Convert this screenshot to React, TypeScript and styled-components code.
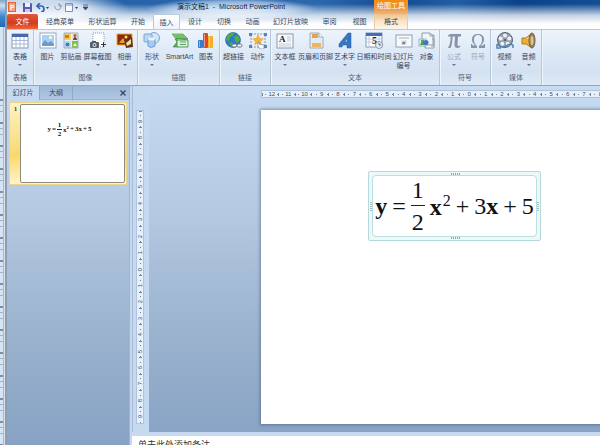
import React from 'react';
import styled, { createGlobalStyle, css } from 'styled-components';

const GlobalStyle = createGlobalStyle`
  * { box-sizing: border-box; }
  html, body, #root { height: 100%; }
  body {
    margin: 0;
    overflow: hidden;
    font-family: "Liberation Sans", "Noto Sans CJK SC", sans-serif;
    font-size: 7px;
    color: #3a4658;
  }
  button, textarea { font: inherit; color: inherit; border: 0; padding: 0; margin: 0; background: none; }
`;

const Screen = styled.div`
  display: flex;
  height: 100vh;
  overflow: hidden;
`;

const BackWindow = styled.aside`
  flex: 0 0 7px;
  display: flex;
  flex-direction: column;
  border-right: 2px solid #8f9dac;
  background: linear-gradient(90deg, #d6e5f6 0 3px, #a9b9ca 3px 4px, #d9e2ec 4px);
`;

const BackTitle = styled.div`
  height: 27px;
  background: linear-gradient(#7fa3c8, #cfdeed 20%, #3f87cf 60%, #2468b4);
`;

const BackRuler = styled.div`
  flex: 1;
  margin-top: 72px;
  width: 3px;
  background: repeating-linear-gradient(#7d8fa6 0 2px, transparent 2px 6px, #a3b3c7 6px 7px, transparent 7px 12px, #a3b3c7 12px 13px, transparent 13px 23px);
`;

const Window = styled.main`
  flex: 1;
  min-width: 0;
  display: flex;
  flex-direction: column;
`;

const Header = styled.header`
  height: 29px;
  display: flex;
  flex-direction: column;
  position: relative;
  background:
    radial-gradient(ellipse 85px 11px at 225px 9px, rgba(190, 213, 238, .95) 30%, rgba(160, 192, 227, .8) 70%, transparent),
    radial-gradient(ellipse 95px 18px at 28px 9px, rgba(214, 227, 241, .95) 50%, transparent),
    linear-gradient(105deg, #2360a7, #2c68ae 52%, #134a91 65%, #235fa5 75%, #0b4388 85%, #174f96);
  &::after {
    content: "";
    position: absolute;
    inset: 4px 0 0;
    background: linear-gradient(transparent, rgba(255, 255, 255, .75) 45%, #fff 80%);
  }
`;

const TitleBar = styled.div`
  height: 14px;
  display: flex;
  align-items: center;
  position: relative;
  z-index: 1;
`;

const QuickAccess = styled.div`
  display: flex;
  align-items: center;
  flex: 0 0 170px;
  height: 14px;
`;

const QuickButton = styled.button<{ $width: number }>`
  width: ${p => p.$width}px;
  height: 12px;
  display: flex;
  align-items: center;
  svg { display: block; }
`;

const WindowTitle = styled.h1`
  margin: 0;
  flex: 0 0 197px;
  font-size: 7px;
  font-weight: 400;
  line-height: 12px;
  white-space: pre;
  color: #14243a;
`;

const TabRow = styled.nav`
  height: 15px;
  display: flex;
  position: relative;
  z-index: 1;
`;

const Tab = styled.button<{ $width: number; $kind?: 'file' | 'active' | 'tool' }>`
  flex: 0 0 ${p => p.$width}px;
  height: 15px;
  line-height: 15px;
  text-align: center;
  white-space: nowrap;
  ${p => p.$kind === 'file' && css`
    color: #fff;
    background: linear-gradient(#e0583a, #d13c1c 60%, #ee6536);
    border-radius: 2px 2px 0 0;
  `}
  ${p => p.$kind === 'active' && css`
    background: linear-gradient(#fff, #eef4fb);
    border: 1px solid #b9cade;
    border-bottom: 0;
    border-radius: 2px 2px 0 0;
    line-height: 13px;
  `}
  ${p => p.$kind === 'tool' && css`
    background: linear-gradient(#f2c08c, #fae5c9 50%, #fdf6e9);
    border: solid #eccb9f;
    border-width: 0 1px;
  `}
`;

const ToolHeading = styled.div`
  flex: 0 0 34px;
  height: 14px;
  line-height: 12px;
  text-align: center;
  color: #fff;
  white-space: nowrap;
  background: linear-gradient(#f28c0e, #e99a48 60%, #efb47a);
`;

const Ribbon = styled.section`
  height: 57px;
  display: flex;
  border-top: 1px solid #b9c9dc;
  border-bottom: 1px solid #91a6c0;
  background: linear-gradient(#edf4fc, #dce8f6 45%, #d3e1f1 75%, #dfeaf6);
`;

const Group = styled.section`
  display: flex;
  flex-direction: column;
  flex: none;
  border-right: 1px solid #b6c7dc;
  box-shadow: 1px 0 #eef5fc;
`;

const GroupButtons = styled.div`
  flex: 1;
  display: flex;
  padding: 2px 1px 0;
`;

const GroupLabel = styled.h2`
  margin: 0;
  height: 13px;
  font-size: 7px;
  font-weight: 400;
  line-height: 12px;
  text-align: center;
  color: #4e6079;
`;

const Command = styled.button<{ $width: number }>`
  width: ${p => p.$width}px;
  height: 38px;
  display: flex;
  flex-direction: column;
  align-items: center;
  line-height: 9px;
  white-space: nowrap;
  &:disabled { color: #9aa6b5; }
  svg { display: block; flex: none; margin-bottom: 3px; }
`;

const Arrow = styled.span`
  margin-top: 3px;
  border: solid transparent;
  border-width: 2px 2px 0;
  border-top-color: #65758a;
`;

const Body = styled.div`
  flex: 1;
  min-height: 0;
  display: flex;
  background: linear-gradient(#c7dbf3, #b2c7e0 38%, #9ab2cd 70%, #87a2c4);
`;

const Outline = styled.aside`
  flex: 0 0 123px;
  border-right: 1px solid #a0b6d0;
`;

const OutlineTabs = styled.div`
  display: flex;
  height: 14px;
  border-bottom: 1px solid #9fb6d1;
  background: linear-gradient(#9fb9d8, #aec6e1);
`;

const OutlineTab = styled.button<{ $width: number; $active?: boolean }>`
  width: ${p => p.$width}px;
  height: 14px;
  line-height: 14px;
  color: #33485f;
  border-right: 1px solid #8fa9c7;
  background: ${p => (p.$active ? '#c6d9ef' : 'transparent')};
`;

const ClosePane = styled.button`
  margin-left: auto;
  width: 13px;
  height: 14px;
  display: grid;
  place-items: center;
`;

const ThumbItem = styled.button`
  display: flex;
  width: 118px;
  height: 83px;
  margin: 2px 0 0 2px;
  padding: 1px;
  border: 1px solid #ead58b;
  border-radius: 1px;
  background: linear-gradient(#fdf2c3, #f8df87 50%, #fad96b 65%, #fff4cb);
`;

const ThumbNumber = styled.span`
  width: 9px;
  padding-top: 1px;
  line-height: 8px;
  text-align: center;
  font-weight: 700;
  font-family: "Liberation Serif", serif;
`;

const ThumbSlide = styled.span`
  flex: 1;
  height: 79px;
  display: flex;
  justify-content: center;
  padding: 14px 6px 0 0;
  border: 1px solid #8e8b78;
  border-radius: 2px;
  background: #fff;
`;

const Editor = styled.section`
  flex: 1;
  min-width: 0;
  display: flex;
  flex-direction: column;
  border-left: 2px solid #c6d8ee;
`;

const Stage = styled.div`
  flex: 1;
  min-height: 0;
  display: flex;
`;

const RulerGutter = styled.div`
  flex: 0 0 16px;
  display: flex;
  padding: 24px 5px 8px 3px;
  border-left: 1px solid #a6bcd6;
  background: #c5d9f1;
`;

const VerticalRuler = styled.div`
  flex: 1;
  display: flex;
  flex-direction: column;
  border: 1px solid #afc3da;
  background: #e7f0fa;
`;

const Canvas = styled.div`
  flex: 1;
  min-width: 0;
  display: flex;
  flex-direction: column;
  overflow: hidden;
  padding: 4px 0 8px 112px;
`;

const HorizontalRuler = styled.div`
  flex: none;
  display: grid;
  grid-template-columns: repeat(25, 1fr);
  width: 412px;
  height: 8px;
  margin-bottom: 12px;
  border: 1px solid #afc3da;
  background: #e7f0fa;
`;

const RulerCell = styled.span<{ $vertical?: boolean }>`
  display: flex;
  flex: 1;
  min-width: 0;
  min-height: 0;
  align-items: center;
  justify-content: space-between;
  font-size: 6px;
  line-height: 6px;
  color: #3f536b;
  flex-direction: ${p => (p.$vertical ? 'column' : 'row')};
`;

const RulerNumber = styled.span<{ $vertical?: boolean }>`
  ${p => p.$vertical && css`
    writing-mode: vertical-rl;
    rotate: 180deg;
  `}
`;

const Tick = styled.i<{ $vertical?: boolean; $long?: boolean }>`
  flex: none;
  background: #7487a0;
  width: ${p => (p.$vertical && p.$long ? 3 : 1)}px;
  height: ${p => (!p.$vertical && p.$long ? 3 : 1)}px;
`;

const Slide = styled.article`
  flex: 1;
  min-height: 0;
  align-self: flex-start;
  aspect-ratio: 4 / 3;
  position: relative;
  background: #fff;
  box-shadow: 0 0 3px 1px rgba(66, 84, 108, .55);
`;

const EquationFrame = styled.div`
  position: absolute;
  left: 107px;
  top: 61px;
  width: 173px;
  height: 70px;
  padding: 3px;
  border: 1px solid #b4d9dc;
  border-radius: 2px;
  background: #edf8f8;
`;

const EquationBox = styled.div`
  height: 62px;
  display: flex;
  align-items: center;
  justify-content: center;
  border: 1px solid #b9dfe0;
  border-radius: 4px;
  background: #fff;
`;

const Grip = styled.i<{ $side: 'top' | 'bottom' | 'left' | 'right' }>`
  position: absolute;
  ${p => (p.$side === 'top' || p.$side === 'bottom'
    ? css`left: 50%; margin-left: -4px; width: 9px; height: 2px;
          background: repeating-linear-gradient(90deg, #92a5aa 0 1px, transparent 1px 2px);`
    : css`top: 50%; margin-top: -4px; width: 2px; height: 9px;
          background: repeating-linear-gradient(#a9bbbf 0 1px, transparent 1px 2px);`)}
  ${p => p.$side}: 1px;
`;

const Formula = styled.span<{ $small?: boolean }>`
  display: flex;
  align-items: center;
  gap: ${p => (p.$small ? 1 : 5)}px;
  font-family: "Liberation Serif", serif;
  font-size: ${p => (p.$small ? 7 : 24)}px;
  line-height: ${p => (p.$small ? 8 : 26)}px;
  height: ${p => (p.$small ? 20 : 58)}px;
  font-weight: ${p => (p.$small ? 700 : 400)};
  color: #111;
  b { font-weight: 700; }
  sup {
    font-size: ${p => (p.$small ? 5 : 16)}px;
    line-height: 1;
    vertical-align: ${p => (p.$small ? 3 : 9)}px;
    margin-left: ${p => (p.$small ? 0 : 1)}px;
  }
`;

const Fraction = styled.span<{ $small?: boolean }>`
  display: flex;
  flex-direction: column;
  text-align: center;
  width: ${p => (p.$small ? 5 : 14)}px;
  span + span { border-top: 1px solid #222; padding-top: ${p => (p.$small ? 0 : 3)}px; }
  span:first-child { padding-bottom: ${p => (p.$small ? 0 : 2)}px; }
`;

const Notes = styled.textarea`
  flex: 0 0 13px;
  display: block;
  width: 100%;
  border-top: 4px solid #c7daf1;
  padding: 3px 6px 0;
  resize: none;
  outline: 0;
  overflow: hidden;
  background: #fff;
  font-size: 9px;
  line-height: 12px;
  white-space: nowrap;
  &::placeholder { color: #333; opacity: 1; }
`;

function Equation({ small }: { small?: boolean }) {
  return (
    <Formula $small={small}>
      {small ? <span>y</span> : <b>y</b>}
      <span>=</span>
      <Fraction $small={small}><span>1</span><span>2</span></Fraction>
      <span><b>x</b><sup>2</sup></span>
      <span>+</span>
      <span>3<b>x</b></span>
      <span>+</span>
      <span>5</span>
    </Formula>
  );
}

function Ruler({ values, vertical }: { values: number[]; vertical?: boolean }) {
  return (
    <>
      {values.map((v, i) => (
        <RulerCell key={i} $vertical={vertical}>
          <Tick $vertical={vertical} $long />
          <Tick $vertical={vertical} />
          <RulerNumber $vertical={vertical}>{Math.abs(v)}</RulerNumber>
          <Tick $vertical={vertical} />
        </RulerCell>
      ))}
    </>
  );
}

const range = (n: number) => Array.from({ length: n * 2 + 1 }, (_, i) => i - n);

const art: Record<string, React.ReactNode> = {
  table: <><rect x="1" y="2" width="16" height="14" fill="#fff" stroke="#8499bd" /><path d="M1 2h16v3H1z" fill="#4668ad" /><path d="M1 8.500h16M1 12h16M5 5v11M9 5v11M13 5v11" stroke="#9badcd" strokeWidth=".8" /></>,
  picture: <><rect x="1" y="1" width="16" height="15" fill="#fff" stroke="#94a7be" /><path d="M3 3h12v11H3z" fill="#a9d0f3" /><circle cx="11.500" cy="5.500" r="1.500" fill="#fffbe0" /><path d="m3 12 3-4 3 3 3-2 3 3v2H3z" fill="#6a9bcb" /></>,
  clip: <><path d="M2 1h7v7H2z" fill="#f4cd58" /><path d="M10 1h6v7h-6z" fill="#dfe8ef" /><path d="M2 9h7v7H2z" fill="#bfdcf2" /><path d="M10 9h6v7h-6z" fill="#83bd4a" /><path d="M3 3h4v3H3z" fill="#cf7d21" /><circle cx="13" cy="3.500" r="1.600" fill="#b5632c" /><path d="M11 8c0-4 4-4 4 0z" fill="#6a4a38" /><circle cx="5.500" cy="12.500" r="2" fill="#4b79b8" /><path d="m11 14 2-3 2 3z" fill="#fff" /><path d="M2 1h14v15H2z" fill="none" stroke="#9fb0bf" /></>,
  shot: <><path d="M4 1h11v14H4z" fill="#fff" stroke="#8d98a6" strokeDasharray="1 1" /><rect x="1" y="10" width="9" height="6" rx="1" fill="#565e68" /><path d="M3 9h4v2H3z" fill="#565e68" /><circle cx="5.500" cy="13" r="2" fill="#dbe4ee" /><circle cx="5.500" cy="13" r="1" fill="#46505d" /><path d="M12 12.500h5M14.500 10v5" stroke="#333" /></>,
  album: <><path d="M1 2h15v11H1z" fill="#902715" stroke="#dcad36" /><path d="m3 11 4-5 2 3 2-2 3 4z" fill="#e7a420" /><circle cx="10" cy="5" r="1.500" fill="#ffe269" /><path d="m8 8 8-3 1 10-7 1z" fill="#5b351e" /><path d="m10 11 5-4v5l-4 2z" fill="#f1dd9c" /></>,
  shapes: <><circle cx="11" cy="6" r="5.500" fill="#d1e5f8" stroke="#7fa5cf" /><rect x="1" y="2" width="8" height="8" rx="1" fill="#bcd7f2" stroke="#7ba3d0" /><path d="M5 7v7q3 3 7 0V7q-4 2-7 0z" fill="#a9caf0" stroke="#6f9dd0" /><ellipse cx="8.500" cy="7" rx="3.500" ry="1.500" fill="#e8f3fd" /></>,
  smart: <><path d="M1 2h11l5 5-4 2-2-2H4l2 3-4 5h5V9z" fill="#55ab59" stroke="#368743" strokeWidth=".6" /><path d="M1 2h11l4 4H4z" fill="#76bf68" /><path d="M6 8h11v7H6z" fill="#def1db" stroke="#52975a" /><path d="M9 10h6M9 12.500h6" stroke="#659f68" /></>,
  chart: <><rect x="1" y="8" width="5" height="8" rx="1" fill="#377bd0" /><rect x="6" y="1" width="5" height="15" rx="1" fill="#df471c" /><rect x="11" y="4" width="5" height="12" rx="1" fill="#f5ae25" /><path d="M2.500 9v6M7.500 2v13M12.500 5v10" stroke="#fff" opacity=".45" /></>,
  link: <><circle cx="8" cy="8" r="7.500" fill="#287bd0" stroke="#21609c" strokeWidth=".6" /><path d="M2 4q3-4 7-3l-1 3-3 1-1 4-3-1zM9 5l4-2 2 5-3 3-2-2zM4 10l4 1v3l-2 1z" fill="#51ad42" /><rect x="7" y="12" width="5" height="3" rx="1.500" fill="#eef3f8" stroke="#69737e" /><rect x="12" y="12" width="5" height="3" rx="1.500" fill="#eef3f8" stroke="#69737e" /></>,
  action: <><path d="M2 2h14v13H2z" fill="#e7f0fb" stroke="#7d9dc8" strokeDasharray="2 1" /><path d="m9 2 2 4 4 .5-3 3 1 4-4-2-4 2 1-4-3-3L7 6z" fill="#f4b53e" /><path d="M0 1h3v3H0zM15 1h3v3h-3zM0 13h3v3H0zM15 13h3v3h-3z" fill="#5685be" /><path d="M9 10v4l2 3h4v-4l-5-1v-2z" fill="#fff" stroke="#67788c" strokeWidth=".6" /></>,
  textbox: <><rect x="1" y="2" width="16" height="14" fill="#f8fafc" stroke="#8c9aac" /><text x="3" y="10" fontFamily="Liberation Serif" fontWeight="700" fontSize="9" fill="#222">A</text><path d="M11 5h4M11 7h4M11 9h4M3 12h12M3 14h12" stroke="#b6bfca" strokeWidth=".8" /></>,
  header: <><path d="M3 1h9l4 4v11H3z" fill="#e1ecf7" stroke="#9aadc3" /><path d="M5 2h6v4H5z" fill="#e9a248" /><path d="M5 11h9v4H5z" fill="#f1b35d" /><path d="M12 1v4h4" fill="#fff" stroke="#9aadc3" /></>,
  wordart: <path fillRule="evenodd" d="M3 12 12 1h3v15h-4v-3H7l-1 2H3zM9 10h2V6z" fill="#3876c5" stroke="#2458a0" strokeWidth=".5" />,
  date: <><rect x="1" y="1" width="16" height="14" fill="#fff" stroke="#8199bd" /><path d="M1 1h16v3H1z" fill="#456db4" /><path d="M2 7h14M2 10h14M4 4v11M14 4v11" stroke="#c2cbd8" /><text x="7" y="12" fontFamily="Liberation Serif" fontWeight="700" fontSize="10" fill="#222">5</text><circle cx="14" cy="13" r="3.500" fill="#e6eef7" stroke="#8d9aa9" /><path d="M14 11v2h2" fill="none" stroke="#576475" /></>,
  number: <><rect x="1" y="3" width="16" height="12" fill="#f7fafd" stroke="#929eae" /><path d="M4 6h10" stroke="#a5b0bd" /><rect x="6" y="8" width="6" height="5" fill="#e3eaf1" /><text x="7" y="13" fontSize="6" fill="#4f5966">#</text></>,
  object: <><path d="M7 3h9v13H7z" fill="#fff" stroke="#8d9cac" /><path d="M4 1h8l3 3v9H4z" fill="#f0f5fa" stroke="#8d9cac" /><path d="M12 1v3h3M14 7h2v7h-3" fill="none" stroke="#9ba7b3" /><rect x="1" y="7" width="7" height="7" fill="#dfeafa" stroke="#7895bf" strokeWidth=".6" /><path d="m2 13 3-6 4 6z" fill="#4d9d40" /><circle cx="8" cy="10.500" r="2.500" fill="#3779c5" /><path d="M4 8v3" stroke="#60a757" strokeWidth="2" /></>,
  pi: <path d="M3 5q0-3 3-3h10v2.500h-3l-.5 8q0 2 2 1.500l1-1q0 3-3 3t-3-3l.5-8.500H7.500Q7.500 12 5.500 16H3q3-5 2.500-11.500Q4 4 3 5z" fill="#8594a9" />,
  omega: <path d="M2 12h1q0 1.500 2 1.500h1.500Q3 11 3 7.500 3 2 9 2t6 5.500q0 3.500-3.500 6H13q2 0 2-1.500h1v4h-6v-2q3-2 3-6.500T9 3 5 7.500 8 14v2H2z" fill="#8594a9" />,
  video: <><circle cx="9" cy="8" r="7.500" fill="#97a1ad" stroke="#5a6572" /><g fill="#eef2f6"><circle cx="9" cy="3.500" r="2" /><circle cx="4.700" cy="6.500" r="2" /><circle cx="13.300" cy="6.500" r="2" /><circle cx="6.300" cy="11.700" r="2" /><circle cx="11.700" cy="11.700" r="2" /></g><circle cx="9" cy="8" r="1" fill="#47515d" /><path d="M1 12q5 5 9 2t7-1v3M1 12v4h4" fill="none" stroke="#4e83b5" strokeWidth="1.500" /></>,
  audio: <><path d="M2 6h4l6-5v15l-6-4H2z" fill="#ecb12f" stroke="#b77a17" /><path d="M3 7h3l4-3v3z" fill="#fbe394" /><ellipse cx="12" cy="8.500" rx="3" ry="7.500" fill="#9b8057" stroke="#6e634f" /><ellipse cx="12" cy="8.500" rx="1.500" ry="4.500" fill="#d8c699" /></>,
};

function Icon({ name }: { name: string }) {
  return <svg width="18" height="17" viewBox="0 0 18 17" aria-hidden="true">{art[name]}</svg>;
}

type Cmd = { icon: string; label: string; second?: string; width: number; menu?: boolean; off?: boolean };
const groups: { name: string; items: Cmd[] }[] = [
  { name: '表格', items: [{ icon: 'table', label: '表格', width: 24, menu: true }] },
  { name: '图像', items: [
    { icon: 'picture', label: '图片', width: 25 },
    { icon: 'clip', label: '剪贴画', width: 22 },
    { icon: 'shot', label: '屏幕截图', width: 31, menu: true },
    { icon: 'album', label: '相册', width: 23, menu: true },
  ] },
  { name: '插图', items: [
    { icon: 'shapes', label: '形状', width: 26, menu: true },
    { icon: 'smart', label: 'SmartArt', width: 29 },
    { icon: 'chart', label: '图表', width: 24 },
  ] },
  { name: '链接', items: [
    { icon: 'link', label: '超链接', width: 25 },
    { icon: 'action', label: '动作', width: 23 },
  ] },
  { name: '文本', items: [
    { icon: 'textbox', label: '文本框', width: 26, menu: true },
    { icon: 'header', label: '页眉和页脚', width: 35 },
    { icon: 'wordart', label: '艺术字', width: 23, menu: true },
    { icon: 'date', label: '日期和时间', width: 36 },
    { icon: 'number', label: '幻灯片', second: '编号', width: 23 },
    { icon: 'object', label: '对象', width: 23 },
  ] },
  { name: '符号', items: [
    { icon: 'pi', label: '公式', width: 26, menu: true, off: true },
    { icon: 'omega', label: '符号', width: 22, off: true },
  ] },
  { name: '媒体', items: [
    { icon: 'video', label: '视频', width: 25, menu: true },
    { icon: 'audio', label: '音频', width: 23, menu: true },
  ] },
];

const tabs: { label: string; width: number; kind?: 'file' | 'active' | 'tool' }[] = [
  { label: '文件', width: 31, kind: 'file' },
  { label: '经典菜单', width: 44 },
  { label: '形状运算', width: 41 },
  { label: '开始', width: 30 },
  { label: '插入', width: 27, kind: 'active' },
  { label: '设计', width: 30 },
  { label: '切换', width: 28 },
  { label: '动画', width: 29 },
  { label: '幻灯片放映', width: 47 },
  { label: '审阅', width: 31 },
  { label: '视图', width: 29 },
  { label: '格式', width: 34, kind: 'tool' },
];

export default function App() {
  return (
    <Screen>
      <GlobalStyle />
      <BackWindow>
        <BackTitle />
        <BackRuler />
      </BackWindow>
      <Window>
        <Header>
          <TitleBar>
            <QuickAccess>
              <QuickButton $width={16} aria-label="PowerPoint">
                <svg width="10" height="10" viewBox="0 0 10 10"><path d="M1 0h8v10H1z" fill="#e76132" /><path d="M2 1h6v8H2z" fill="#f5a17c" /><text x="3" y="8" fontSize="7" fontWeight="700" fill="#fff">P</text></svg>
              </QuickButton>
              <QuickButton $width={13} aria-label="保存">
                <svg width="9" height="9" viewBox="0 0 9 9"><path d="M0 0h8l1 1v8H0z" fill="#5a58ad" /><path d="M2 0h5v4H2z" fill="#eef2fc" /><path d="M2 6h5v3H2z" fill="#c7cee4" /></svg>
              </QuickButton>
              <QuickButton $width={18} aria-label="撤消">
                <svg width="14" height="9" viewBox="0 0 14 9"><path d="M1 3h4q3 0 3 3t-3 3M4 0 1 3l3 3" fill="none" stroke="#3267b6" strokeWidth="1.700" /><path d="m10 4 3 0-1.500 2z" fill="#31455f" /></svg>
              </QuickButton>
              <QuickButton $width={11} aria-label="恢复">
                <svg width="8" height="8" viewBox="0 0 8 8"><path d="M5 1a3 3 0 1 1-4 2M5 0v3h3" fill="none" stroke="#8e9db2" /></svg>
              </QuickButton>
              <QuickButton $width={18} aria-label="表格">
                <svg width="13" height="9" viewBox="0 0 13 9"><path d="M.5.5h7v8h-7z" fill="#f9fbfe" stroke="#7793ba" /><path d="M1 2h7" stroke="#6d8bbd" /><path d="m10 4 3 0-1.500 2z" fill="#31455f" /></svg>
              </QuickButton>
              <QuickButton $width={8} aria-label="自定义快速访问工具栏">
                <svg width="5" height="6" viewBox="0 0 5 6"><path d="M0 1h5M0 3h5L2.500 6z" stroke="#314c71" fill="#314c71" strokeWidth=".7" /></svg>
              </QuickButton>
            </QuickAccess>
            <WindowTitle>{'演示文稿1  -  Microsoft PowerPoint'}</WindowTitle>
            <ToolHeading>绘图工具</ToolHeading>
          </TitleBar>
          <TabRow>
            {tabs.map(t => <Tab key={t.label} $width={t.width} $kind={t.kind}>{t.label}</Tab>)}
          </TabRow>
        </Header>
        <Ribbon>
          {groups.map(g => (
            <Group key={g.name}>
              <GroupButtons>
                {g.items.map(c => (
                  <Command key={c.label} $width={c.width} disabled={c.off}>
                    <Icon name={c.icon} />
                    <span>{c.label}</span>
                    {c.second && <span>{c.second}</span>}
                    {c.menu && <Arrow />}
                  </Command>
                ))}
              </GroupButtons>
              <GroupLabel>{g.name}</GroupLabel>
            </Group>
          ))}
        </Ribbon>
        <Body>
          <Outline>
            <OutlineTabs>
              <OutlineTab $width={33} $active>幻灯片</OutlineTab>
              <OutlineTab $width={33}>大纲</OutlineTab>
              <ClosePane aria-label="关闭">
                <svg width="6" height="6" viewBox="0 0 6 6"><path d="m.5.5 5 5m0-5-5 5" stroke="#31435a" strokeWidth="1.200" /></svg>
              </ClosePane>
            </OutlineTabs>
            <ThumbItem>
              <ThumbNumber>1</ThumbNumber>
              <ThumbSlide><Equation small /></ThumbSlide>
            </ThumbItem>
          </Outline>
          <Editor>
            <Stage>
              <RulerGutter>
                <VerticalRuler><Ruler vertical values={range(9)} /></VerticalRuler>
              </RulerGutter>
              <Canvas>
                <HorizontalRuler><Ruler values={range(12)} /></HorizontalRuler>
                <Slide>
                  <EquationFrame>
                    <EquationBox><Equation /></EquationBox>
                    <Grip $side="top" />
                    <Grip $side="bottom" />
                    <Grip $side="left" />
                    <Grip $side="right" />
                  </EquationFrame>
                </Slide>
              </Canvas>
            </Stage>
            <Notes aria-label="备注" placeholder="单击此处添加备注" />
          </Editor>
        </Body>
      </Window>
    </Screen>
  );
}
